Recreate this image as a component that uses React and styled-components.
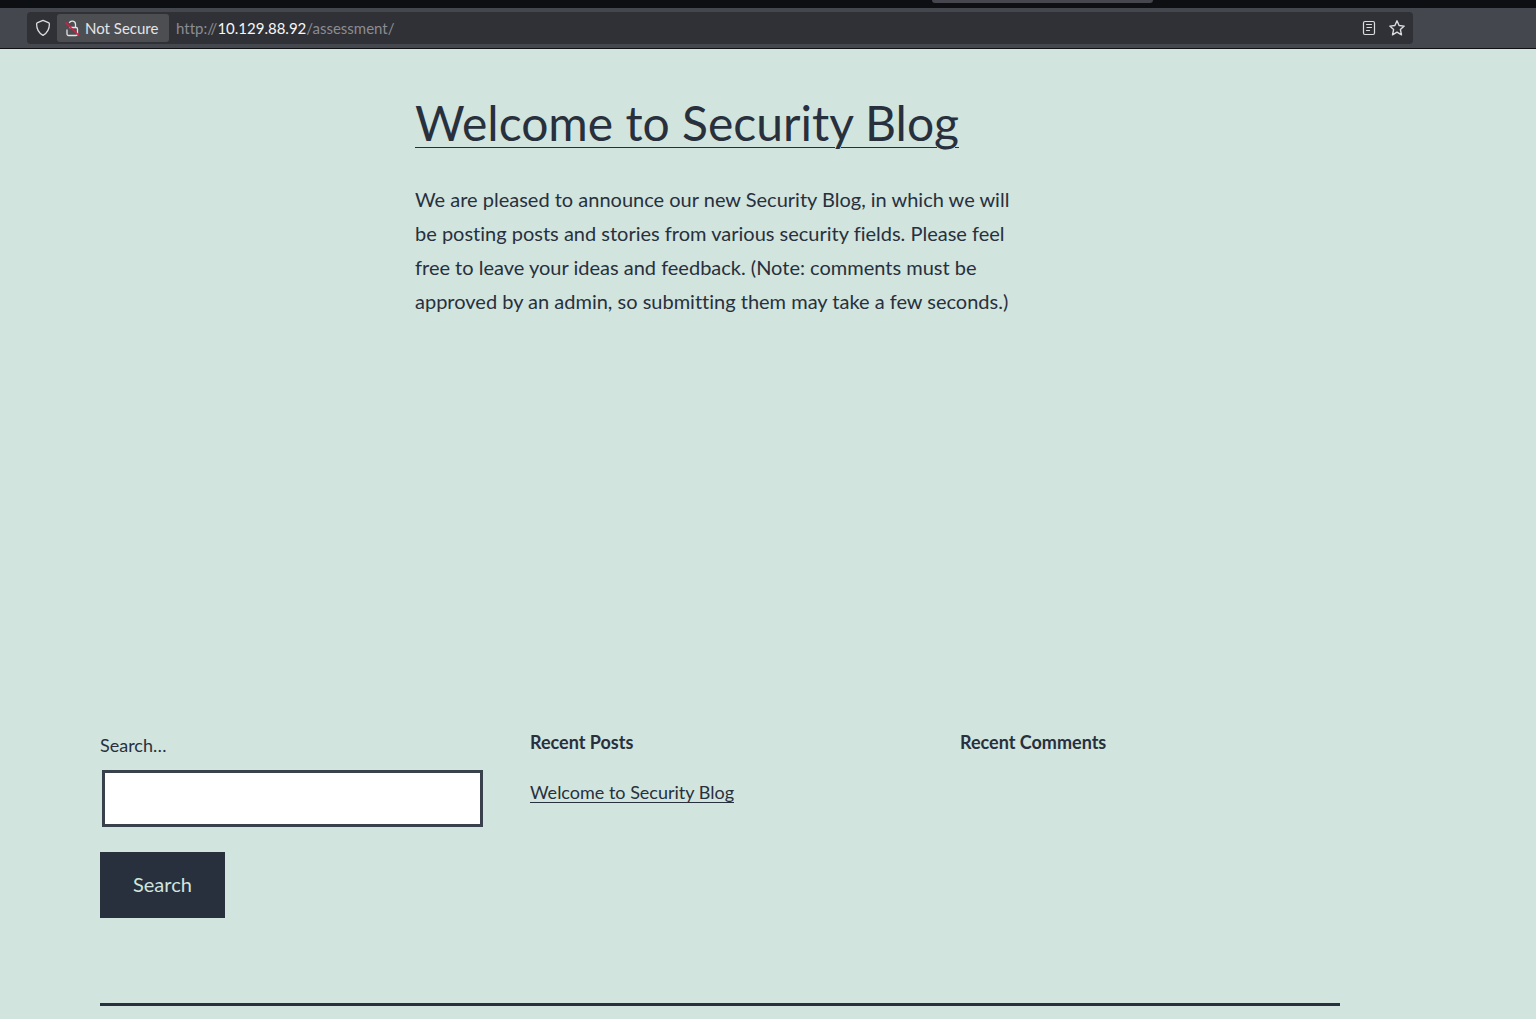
import React from "react";
import styled, { createGlobalStyle } from "styled-components";

const ink = "#28303d";
const mint = "#d1e4dd";

const GlobalStyle = createGlobalStyle`
  *, *::before, *::after { box-sizing: border-box; }
  body {
    margin: 0;
    background: ${mint};
    color: ${ink};
    font-family: Lato, "Noto Sans", sans-serif;
    font-size: 20px;
    font-variant-ligatures: none;
    line-height: 34px;
  }
`;

const TabStrip = styled.div`
  display: flex;
  justify-content: flex-end;
  height: 8px;
  padding-right: 383px;
  background: #0e0f13;
`;

const ActiveTab = styled.div`
  width: 221px;
  height: 3px;
  border-radius: 0 0 4px 4px;
  background: #45464e;
`;

const Toolbar = styled.header`
  display: flex;
  height: 41px;
  padding: 4px 123px 4px 27px;
  border-bottom: 1px solid #101114;
  background: #45474e;
`;

const AddressBar = styled.div`
  display: flex;
  flex: 1;
  align-items: center;
  height: 32px;
  padding: 2px;
  border-radius: 4px;
  background: #303136;
  color: #e4e4e6;
  font-size: 15px;
  line-height: 20px;
`;

const IconButton = styled.button`
  display: grid;
  place-items: center;
  width: 28px;
  height: 28px;
  padding: 0;
  border: 0;
  background: none;
  color: #dcdcdf;
`;

const SecurityButton = styled.button`
  display: flex;
  align-items: center;
  gap: 5px;
  width: 112px;
  height: 28px;
  padding: 0 7px;
  border: 0;
  border-radius: 3px;
  background: #4d4e52;
  color: inherit;
  font: inherit;
  font-variant-ligatures: none;
  white-space: nowrap;
`;

const Url = styled.div`
  flex: 1;
  padding-left: 7px;
  color: #8b8c91;
`;

const Host = styled.span`
  color: #f7f7f8;
`;

const Page = styled.div`
  padding: 44px 196px 0 100px;
`;

const Article = styled.article`
  max-width: 610px;
  min-height: 634px;
  margin: 0 auto;
`;

const Title = styled.h1`
  margin: 0 0 29px;
  font-size: 48px;
  font-weight: 400;
  line-height: 60px;
`;

const TextLink = styled.a`
  color: inherit;
  text-decoration: underline;
  text-decoration-thickness: 1px;
  text-underline-offset: ${(p) => (p.$large ? "6px" : "3px")};
`;

const Paragraph = styled.p`
  margin: 0;
`;

const Widgets = styled.footer`
  display: grid;
  grid-template-columns: repeat(3, 1fr);
  gap: 50px;
  padding-bottom: 85px;
  border-bottom: 3px solid ${ink};
  font-size: 18px;
  line-height: 30px;
`;

const SearchForm = styled.form`
  display: flex;
  flex-direction: column;
  align-items: flex-start;
  padding-top: 3px;
`;

const SearchInput = styled.input`
  width: calc(100% + 1px);
  height: 57px;
  margin: 10px 0 25px 2px;
  padding: 10px;
  border: 3px solid #39414d;
  border-radius: 0;
  background: #fff;
  color: ${ink};
  font: inherit;
`;

const SearchButton = styled.button`
  height: 66px;
  padding: 0 33px 2px;
  border: 0;
  background: ${ink};
  color: ${mint};
  font: inherit;
  font-size: 20px;
`;

const WidgetTitle = styled.h2`
  margin: 0 0 20px;
  font-size: 18px;
  font-weight: 700;
  line-height: 30px;
`;

const PostList = styled.ul`
  margin: 0;
  padding: 0;
  list-style: none;
`;

const ShieldIcon = () => (
  <svg width="16" height="18" viewBox="0 0 16 18" fill="none" stroke="currentColor" strokeWidth="1.3" strokeLinejoin="round" aria-hidden="true">
    <path d="M8 1.4 13.4 3.6c.7.3 1 .7 1 1.400 0 5-1.6 8.700-6.400 11.400C3.200 13.700 1.600 10 1.600 5c0-.7.3-1.100 1-1.400z" />
  </svg>
);

const LockIcon = () => (
  <svg width="16" height="18" viewBox="0 0 16 18" fill="none" stroke="currentColor" strokeWidth="1.3" aria-hidden="true">
    <path d="M5.5 8.500h6.500a1.500 1.500 0 0 1 1.500 1.500v5a1.500 1.500 0 0 1-1.500 1.500H4.500A1.500 1.500 0 0 1 3 15v-4.500" />
    <path d="M11.500 8.500V5.300a3.300 3.300 0 0 0-6.300-1.300" />
    <path d="M1.500 3.500 15 16.500" stroke="#e8173f" strokeWidth="1.5" />
  </svg>
);

const ReaderIcon = () => (
  <svg width="16" height="16" viewBox="0 0 16 16" fill="none" stroke="currentColor" strokeWidth="1.2" strokeLinecap="round" aria-hidden="true">
    <rect x="2.5" y="1.5" width="11" height="13" rx="1.5" />
    <path d="M5.500 4.500h5M6 7.500h4.500M5.500 10.500h3" />
  </svg>
);

const StarIcon = () => (
  <svg width="18" height="18" viewBox="0 0 18 18" fill="none" stroke="currentColor" strokeWidth="1.4" strokeLinejoin="round" aria-hidden="true">
    <path d="m9 1.800 2.100 4.700 5.100.6-3.800 3.500 1.100 5.200L9 13.200l-4.500 2.600 1.100-5.200L1.800 7.100l5.100-.6z" />
  </svg>
);

export default function App() {
  return (
    <>
      <GlobalStyle />
      <TabStrip>
        <ActiveTab />
      </TabStrip>
      <Toolbar>
        <AddressBar>
          <IconButton type="button" aria-label="Tracking protection">
            <ShieldIcon />
          </IconButton>
          <SecurityButton type="button">
            <LockIcon />
            Not Secure
          </SecurityButton>
          <Url>
            http://<Host>10.129.88.92</Host>/assessment/
          </Url>
          <IconButton type="button" aria-label="Reader view">
            <ReaderIcon />
          </IconButton>
          <IconButton type="button" aria-label="Bookmark this page">
            <StarIcon />
          </IconButton>
        </AddressBar>
      </Toolbar>
      <Page>
        <Article>
          <Title>
            <TextLink href="#post" $large>Welcome to Security Blog</TextLink>
          </Title>
          <Paragraph>
            We are pleased to announce our new Security Blog, in which we will
            <br />
            be posting posts and stories from various security fields. Please feel
            <br />
            free to leave your ideas and feedback. (Note: comments must be
            <br />
            approved by an admin, so submitting them may take a few seconds.)
          </Paragraph>
        </Article>
        <Widgets>
          <SearchForm role="search">
            <label htmlFor="search">Search…</label>
            <SearchInput id="search" type="search" />
            <SearchButton type="submit">Search</SearchButton>
          </SearchForm>
          <section>
            <WidgetTitle>Recent Posts</WidgetTitle>
            <PostList>
              <li>
                <TextLink href="#post">Welcome to Security Blog</TextLink>
              </li>
            </PostList>
          </section>
          <section>
            <WidgetTitle>Recent Comments</WidgetTitle>
          </section>
        </Widgets>
      </Page>
    </>
  );
}
